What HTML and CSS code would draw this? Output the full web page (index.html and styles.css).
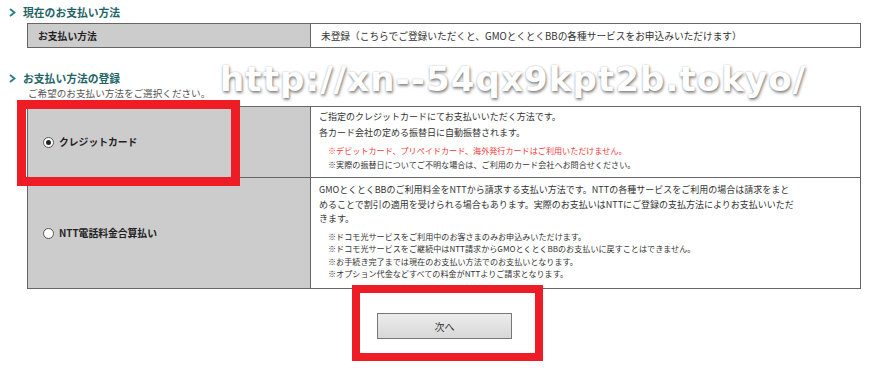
FILE: index.html
```html
<!DOCTYPE html>
<html lang="ja">
<head>
<meta charset="utf-8">
<link rel="stylesheet" href="styles.css">
</head>
<body>
<div class="page">
  <h2 class="sec-head sec-head-first"><svg class="chev" width="7" height="9" viewBox="0 0 7 9"><polyline points="1,1 5.5,4.5 1,8" fill="none" stroke="#2f7f8c" stroke-width="2"/></svg>現在のお支払い方法</h2>
  <table class="tbl tbl-current">
    <tr>
      <th class="lbl">お支払い方法</th>
      <td class="val">未登録（こちらでご登録いただくと、GMOとくとくBBの各種サービスをお申込みいただけます）</td>
    </tr>
  </table>

  <h2 class="sec-head sec-head-second"><svg class="chev" width="7" height="9" viewBox="0 0 7 9"><polyline points="1,1 5.5,4.5 1,8" fill="none" stroke="#2f7f8c" stroke-width="2"/></svg>お支払い方法の登録</h2>
  <p class="sub">ご希望のお支払い方法をご選択ください。</p>

  <table class="tbl tbl-select">
    <tr class="row-card">
      <th class="lbl opt"><span class="radio checked"></span>クレジットカード</th>
      <td class="val desc">
        <p class="main">ご指定のクレジットカードにてお支払いいただく方法です。</p>
        <p class="main">各カード会社の定める振替日に自動振替されます。</p>
        <ul class="notes notes-card">
          <li class="red">※デビットカード、プリペイドカード、海外発行カードはご利用いただけません。</li>
          <li>※実際の振替日についてご不明な場合は、ご利用のカード会社へお問合せください。</li>
        </ul>
      </td>
    </tr>
    <tr class="row-ntt">
      <th class="lbl opt"><span class="radio"></span>NTT電話料金合算払い</th>
      <td class="val desc">
        <p class="main main-ntt">GMOとくとくBBのご利用料金をNTTから請求する支払い方法です。NTTの各種サービスをご利用の場合は請求をまと<br>めることで割引の適用を受けられる場合もあります。実際のお支払いはNTTにご登録の支払方法によりお支払いいただ<br>きます。</p>
        <ul class="notes notes-ntt">
          <li>※ドコモ光サービスをご利用中のお客さまのみお申込みいただけます。</li>
          <li>※ドコモ光サービスをご継続中はNTT請求からGMOとくとくBBのお支払いに戻すことはできません。</li>
          <li>※お手続き完了までは現在のお支払い方法でのお支払いとなります。</li>
          <li>※オプション代金などすべての料金がNTTよりご請求となります。</li>
        </ul>
      </td>
    </tr>
  </table>

  <div class="actions">
    <button class="btn-next" type="button">次へ</button>
  </div>

  <div class="mark mark-card"></div>
  <div class="mark mark-next"></div>
  <div class="watermark">http://xn--54qx9kpt2b.tokyo/</div>
</div>
</body>
</html>
```

FILE: styles.css
```css
* { box-sizing: border-box; }
html, body { margin: 0; padding: 0; background: #fff; }
body {
  font-family: "Noto Sans CJK JP", "Noto Sans", sans-serif;
  color: #333;
  width: 876px;
  height: 368px;
  overflow: hidden;
}
.page { position: relative; width: 876px; height: 368px; }

.sec-head {
  display: flex;
  align-items: center;
  gap: 7px;
  margin: 0;
  padding-left: 9px;
  height: 18px;
  font-size: 10.8px;
  font-weight: bold;
  color: #1f6466;
  line-height: 18px;
}
.sec-head-first { margin-top: 3px; }
.sec-head-second { margin-top: 21px; }
.chev { display: block; }

.sub {
  margin: 0;
  padding-left: 28px;
  height: 12px;
  line-height: 12px;
  font-size: 9.6px;
  color: #555;
}

.tbl {
  margin-left: 27px;
  width: 834px;
  border-collapse: collapse;
  table-layout: fixed;
}
.tbl-current { margin-top: 2px; }
.tbl-select { margin-top: 7px; }
.tbl th, .tbl td { border: 1px solid #666; padding: 0; }
.tbl .lbl {
  width: 283px;
  background: #cccccc;
  text-align: left;
  font-weight: bold;
  font-size: 9.8px;
  color: #222;
}
.tbl-current .lbl { padding-left: 10px; height: 24px; }
.tbl-current .val { padding-left: 10px; font-size: 9.7px; color: #333; }

.tbl .opt { padding-left: 15px; vertical-align: middle; }
.radio {
  display: inline-block;
  width: 11px;
  height: 11px;
  border: 1px solid #555;
  border-radius: 50%;
  background: #fff;
  vertical-align: -2px;
  margin-right: 5px;
  position: relative;
}
.radio.checked::after {
  content: "";
  position: absolute;
  left: 2px; top: 2px;
  width: 5px; height: 5px;
  border-radius: 50%;
  background: #222;
}

.row-card td, .row-card th { height: 71px; }
.row-ntt td, .row-ntt th { height: 111px; }
.tbl .desc { vertical-align: top; padding: 2px 8px 0 8px; }
.main { margin: 0; font-size: 9px; line-height: 16px; color: #333; white-space: nowrap; }
.main-ntt { line-height: 14.5px; margin-top: 3px; }
.notes {
  list-style: none;
  margin: 3px 0 0;
  padding-left: 9px;
  font-size: 8.1px;
  line-height: 13.5px;
  color: #333;
}
.notes-ntt { margin-top: 4px; line-height: 12.5px; }
.red { color: #f23a3a; }

.actions { display: flex; padding-left: 377px; margin-top: 24px; }
.btn-next {
  width: 135px;
  height: 26px;
  border: 1px solid #777;
  background: linear-gradient(#ececec, #d8d8d8);
  font-family: "Noto Sans CJK JP", sans-serif;
  font-size: 10px;
  color: #333;
  padding: 0;
}

.mark { position: absolute; border-style: solid; border-color: #ee1c25; }
.mark-card { left: 17px; top: 97px; width: 223px; height: 86px; border-width: 9px; }
.mark-next { left: 352px; top: 282px; width: 191px; height: 76px; border-width: 8px; }

.watermark {
  position: absolute;
  left: 220px;
  top: 56px;
  font-family: "DejaVu Sans", sans-serif;
  font-weight: bold;
  font-size: 34px;
  letter-spacing: 1.1px;
  color: #fff;
  text-shadow: 1px 2px 3px rgba(0,0,0,0.45), 0 0 2px rgba(0,0,0,0.25);
  white-space: nowrap;
}
```
